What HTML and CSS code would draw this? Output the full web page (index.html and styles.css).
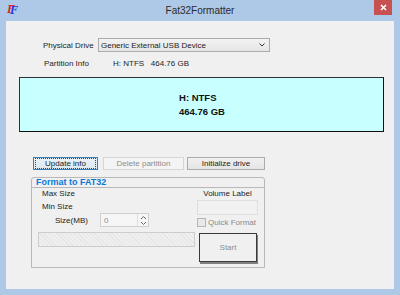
FILE: index.html
```html
<!DOCTYPE html>
<html>
<head>
<meta charset="utf-8">
<link rel="stylesheet" href="styles.css">
</head>
<body>
<div class="window">
  <div class="titlebar">
    <div class="app-icon">F</div>
    <div class="title">Fat32Formatter</div>
    <div class="close">
      <svg width="7" height="7" viewBox="0 0 7 7"><path d="M1 1L6 6M6 1L1 6" stroke="#fff" stroke-width="1.6"/></svg>
    </div>
  </div>
  <div class="client">
    <div class="row-drive">
      <span class="lbl-drive">Physical Drive</span>
      <div class="combo">
        <span>Generic External USB Device</span>
        <svg width="6" height="4" viewBox="0 0 6 4"><path d="M0.5 0.5L3 3L5.5 0.5" fill="none" stroke="#333" stroke-width="1"/></svg>
      </div>
    </div>
    <div class="row-part">
      <span class="lbl-part">Partition Info</span>
      <span class="part-val">H: NTFS&nbsp;&nbsp;&nbsp;464.76 GB</span>
    </div>
    <div class="infobox">
      <div class="infotext">
        <div>H: NTFS</div>
        <div>464.76 GB</div>
      </div>
    </div>
    <div class="btnrow">
      <div class="btn btn-focus"><span class="focus">Update info</span></div>
      <div class="btn btn-disabled">Delete partition</div>
      <div class="btn btn-normal">Initialize drive</div>
    </div>
    <div class="group">
      <div class="group-head">Format to FAT32</div>
      <div class="group-body">
        <div class="col-left">
          <div class="r1">Max Size</div>
          <div class="r2">Min Size</div>
          <div class="r3">
            <span class="lbl-size">Size(MB)</span>
            <div class="spin">
              <span class="spin-val">0</span>
              <div class="spin-btns">
                <svg width="7" height="5" viewBox="0 0 7 5"><path d="M1 4L3.5 1.5L6 4" fill="none" stroke="#666" stroke-width="1"/></svg>
                <svg width="7" height="5" viewBox="0 0 7 5"><path d="M1 1L3.5 3.5L6 1" fill="none" stroke="#666" stroke-width="1"/></svg>
              </div>
            </div>
          </div>
          <div class="progress"></div>
        </div>
        <div class="col-right">
          <div class="vol-lbl">Volume Label</div>
          <div class="vol-input"></div>
          <div class="quick">
            <span class="chk"></span>
            <span class="quick-lbl">Quick Format</span>
          </div>
          <div class="start">Start</div>
        </div>
      </div>
    </div>
  </div>
</div>
</body>
</html>
```
FILE: styles.css
```css
* { box-sizing: border-box; }
html, body { margin: 0; padding: 0; }
body {
  font-family: "Liberation Sans", Arial, sans-serif;
  font-size: 8px;
  color: #1c1c1c;
  background: #aec8e8;
}
.window {
  width: 400px;
  height: 295px;
  background: #aec8e8;
  display: flex;
  flex-direction: column;
}
.titlebar {
  height: 21px;
  display: grid;
  grid-template-columns: 1fr auto 1fr;
  align-items: start;
}
.app-icon {
  margin: 4px 0 0 10px;
  font-family: "Liberation Serif", serif;
  font-weight: bold;
  font-style: italic;
  font-size: 12px;
  line-height: 12px;
  color: #2040e0;
  text-shadow: -3px -1px 0 #e02020;
}
.title {
  font-size: 10px;
  line-height: 21px;
  color: #2a2a2a;
}
.close {
  justify-self: end;
  width: 18px;
  height: 15px;
  margin-right: 8px;
  background: #c75050;
  display: flex;
  align-items: center;
  justify-content: center;
}
.client {
  margin: 0 6px;
  height: 268px;
  background: #f0f0f0;
  padding-top: 17px;
}
.row-drive {
  display: flex;
  align-items: center;
  height: 14px;
  margin-left: 37px;
}
.lbl-drive { width: 55px; }
.combo {
  width: 172px;
  height: 14px;
  border: 1px solid #acacac;
  background: linear-gradient(#f2f2f2, #e6e6e6);
  display: flex;
  align-items: center;
  justify-content: space-between;
  padding: 0 4px 0 2px;
}
.row-part {
  display: flex;
  height: 10px;
  line-height: 10px;
  margin: 7px 0 0 38px;
}
.lbl-part { width: 69px; }
.infobox {
  margin: 8px 0 0 13px;
  width: 365px;
  height: 55px;
  background: #c8ffff;
  border: 1px solid #303030;
  border-right-color: #101010;
  border-bottom-color: #101010;
  display: flex;
  align-items: center;
  justify-content: center;
}
.infotext {
  font-size: 9.5px;
  font-weight: bold;
  line-height: 14px;
  color: #111;
  margin-left: 1px;
}
.btnrow {
  display: flex;
  margin: 25px 0 0 27px;
  height: 13px;
}
.btn {
  height: 13px;
  display: flex;
  align-items: center;
  justify-content: center;
  font-size: 8px;
  line-height: 9px;
}
.btn-focus {
  width: 65px;
  border: 1px solid #3c7fb1;
  background: linear-gradient(#eaf2f8, #dde8f0);
  padding: 0 1px;
}
.focus {
  width: 100%;
  height: 11px;
  border: 1px dotted #444;
  display: flex;
  align-items: center;
  justify-content: center;
  line-height: 9px;
}
.btn-disabled {
  width: 81px;
  margin-left: 5px;
  border: 1px solid #d6d6d6;
  background: #f4f4f4;
  color: #8d8d8d;
}
.btn-normal {
  width: 78px;
  margin-left: 3px;
  border: 1px solid #acacac;
  background: linear-gradient(#f0f0f0, #e5e5e5);
}
.group {
  margin: 7px 0 0 25px;
  width: 234px;
  height: 91px;
  border: 1px solid #b8b8b8;
  border-radius: 3px 3px 0 0;
}
.group-head {
  height: 10px;
  border-bottom: 1px solid #b8b8b8;
  color: #0a78d8;
  font-weight: bold;
  font-size: 9px;
  line-height: 8px;
  padding-left: 4px;
}
.group-body { display: flex; }
.col-left { width: 165px; }
.r1, .r2 {
  height: 12px;
  line-height: 12px;
  padding-left: 10px;
}
.r2 { margin-top: 1px; }
.r3 {
  display: flex;
  align-items: center;
  height: 14px;
  padding-left: 23px;
}
.lbl-size { width: 45px; }
.spin {
  width: 49px;
  height: 14px;
  border: 1px solid #cfcfcf;
  background: #f6f6f6;
  display: flex;
  align-items: center;
  justify-content: space-between;
  padding-left: 3px;
}
.spin-val { color: #8d8d8d; }
.spin-btns {
  width: 11px;
  height: 12px;
  border-left: 1px solid #dcdcdc;
  display: flex;
  flex-direction: column;
  align-items: center;
  justify-content: space-around;
}
.progress {
  margin: 5px 0 0 6px;
  width: 157px;
  height: 15px;
  border: 1px solid #cdcdcd;
  background: repeating-linear-gradient(45deg, #e6e6e6 0 1px, #efefef 1px 3px);
}
.col-right { width: 66px; }
.vol-lbl {
  width: 61px;
  height: 12px;
  line-height: 12px;
  text-align: center;
}
.vol-input {
  width: 61px;
  height: 15px;
  border: 1px solid #dedede;
  background: #f1f1f1;
}
.quick {
  display: flex;
  align-items: center;
  height: 9px;
  margin-top: 3px;
}
.chk {
  width: 9px;
  height: 9px;
  border: 1px solid #b5b5b5;
  background: #e9e9e9;
}
.quick-lbl {
  margin-left: 2px;
  color: #8a8a8a;
}
.start {
  margin: 6px 0 0 2px;
  width: 58px;
  height: 29px;
  border: 1px solid #3a3a3a;
  background: #f0f0f0;
  box-shadow: 1px 2px 0 #808080;
  color: #8d8d8d;
  display: flex;
  align-items: center;
  justify-content: center;
}
```
